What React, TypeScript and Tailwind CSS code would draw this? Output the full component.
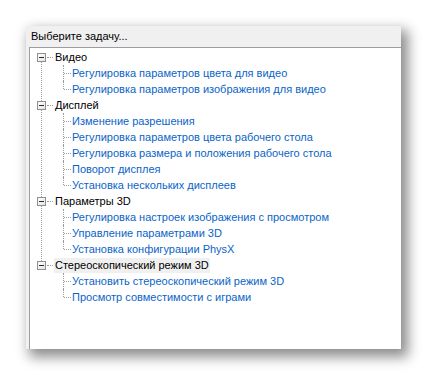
const groups = [
  {
    title: "Видео",
    items: ["Регулировка параметров цвета для видео", "Регулировка параметров изображения для видео"],
  },
  {
    title: "Дисплей",
    items: [
      "Изменение разрешения",
      "Регулировка параметров цвета рабочего стола",
      "Регулировка размера и положения рабочего стола",
      "Поворот дисплея",
      "Установка нескольких дисплеев",
    ],
  },
  {
    title: "Параметры 3D",
    items: [
      "Регулировка настроек изображения с просмотром",
      "Управление параметрами 3D",
      "Установка конфигурации PhysX",
    ],
  },
  {
    title: "Стереоскопический режим 3D",
    items: ["Установить стереоскопический режим 3D", "Просмотр совместимости с играми"],
    selected: true,
  },
]

function Expander() {
  return (
    <div className="relative z-10 flex h-[9px] w-[9px] items-center justify-center border border-[#8e8f8f] bg-gradient-to-br from-white to-[#e4e4e4]">
      <div className="h-px w-[5px] bg-[#2a2a2a]" />
    </div>
  )
}

export default function App() {
  return (
    <div className="h-[375px] w-[427px] bg-white pl-[26px] pt-[26px] font-['Liberation_Sans',Arial,sans-serif] text-[11px]">
      <div className="flex h-[323px] w-[375px] flex-col bg-[#f0f0f0] shadow-[5px_6px_12px_2px_rgba(0,0,0,0.45)]">
        <div className="flex h-[21px] items-center px-[5px] text-black">Выберите задачу...</div>
        <div className="ml-[3px] flex-1 border-l border-t border-[#9d9da1] bg-white pt-[1px]">
          {groups.map((g, gi) => (
            <div key={g.title} className="relative">
              {gi < groups.length - 1 && (
                <div className="absolute -bottom-[8px] left-[11px] top-[8px] border-l border-dotted border-[#9a9a9a]" />
              )}
              <div className="flex h-[16px] items-center">
                <div className="ml-[7px]">
                  <Expander />
                </div>
                <div className="ml-px w-[6px] border-t border-dotted border-[#9a9a9a]" />
                <span className={`ml-px px-px leading-[15px] text-black ${g.selected ? "bg-[#f0f0f0]" : ""}`}>
                  {g.title}
                </span>
              </div>
              {g.items.map((item, i) => (
                <div key={item} className="relative flex h-[16px] items-center">
                  <div
                    className={`absolute left-[33px] top-0 border-l border-dotted border-[#9a9a9a] ${
                      i === g.items.length - 1 ? "h-[8px]" : "h-[16px]"
                    }`}
                  />
                  <div className="ml-[34px] w-[7px] border-t border-dotted border-[#9a9a9a]" />
                  <span className="ml-px text-[#0a64c8]">{item}</span>
                </div>
              ))}
            </div>
          ))}
        </div>
      </div>
    </div>
  )
}
